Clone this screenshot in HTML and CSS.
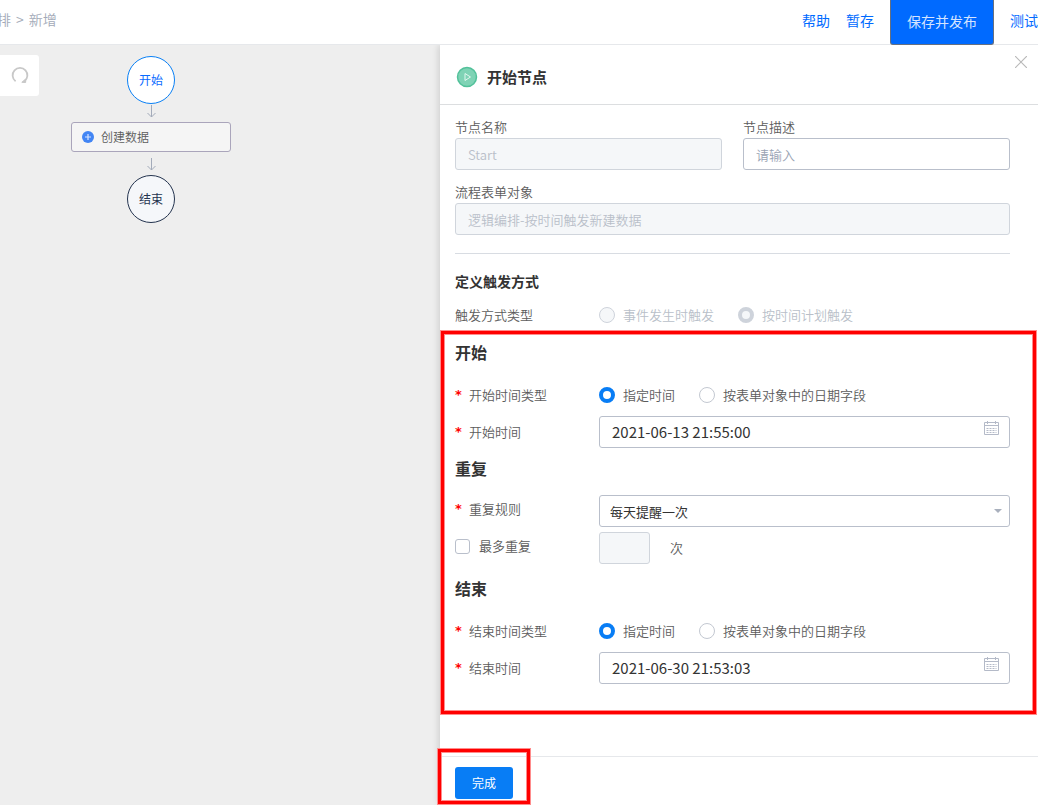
FILE: index.html
```html
<!DOCTYPE html>
<html lang="zh-CN">
<head>
<meta charset="utf-8">
<title>新增</title>
<link rel="stylesheet" href="styles.css">
</head>
<body>
<header class="topbar">
  <nav class="crumbs"><span>排</span><span>&gt;</span><span>新增</span></nav>
  <div class="actions">
    <a href="#">帮助</a>
    <a href="#">暂存</a>
    <button type="button" class="publish">保存并发布</button>
    <a href="#">测试</a>
  </div>
</header>
<div class="workspace">
  <main class="canvas">
    <button type="button" class="redo" aria-label="重做">
      <svg width="18" height="18" viewBox="0 0 18 18" fill="none" stroke="#c8c8c8" stroke-width="1.800"><path d="M4.600 15.200A7.400 7.400 0 1 1 13.400 15.200"/><path d="M10.800 16.300l3.800.2.200-3.600z" fill="#c8c8c8" stroke-width="1"/></svg>
    </button>
    <div class="flow">
      <div class="node-circle node-start">开始</div>
      <svg class="arrow arrow-first" width="10" height="13" viewBox="0 0 10 13" fill="none" stroke="#a3abba"><path d="M5.500 0v12M1.500 8l4 4 4-4"/></svg>
      <div class="node-box">
        <svg width="12" height="12" viewBox="0 0 12 12"><circle cx="6" cy="6" r="6" fill="#4285f4"/><path d="M6 3v6M3 6h6" stroke="#d5e4ff" stroke-width="1.200"/></svg>
        <span>创建数据</span>
      </div>
      <svg class="arrow" width="10" height="13" viewBox="0 0 10 13" fill="none" stroke="#a3abba"><path d="M5.500 0v12M1.500 8l4 4 4-4"/></svg>
      <div class="node-circle node-end">结束</div>
    </div>
  </main>
  <aside class="panel">
    <div class="panel-head">
      <svg width="22" height="22" viewBox="0 0 22 22"><circle cx="11" cy="11" r="9.500" fill="#7fd3b5" stroke="#52c19a" stroke-width="1.500"/><path d="M9 7.500v7l5.500-3.500z" fill="none" stroke="#e2f7ef"/></svg>
      <h1>开始节点</h1>
      <button type="button" class="close" aria-label="关闭">
        <svg width="12" height="12" viewBox="0 0 12 12" stroke="#b9b9b9" stroke-width="1.200"><path d="M0 0l12 12M12 0L0 12"/></svg>
      </button>
    </div>
    <form class="panel-body">
      <div class="fields">
        <div class="field"><label for="name">节点名称</label><input class="input" id="name" type="text" value="Start" disabled></div>
        <div class="field"><label for="desc">节点描述</label><input class="input" id="desc" type="text" placeholder="请输入"></div>
        <div class="field field-wide"><label for="object">流程表单对象</label><input class="input" id="object" type="text" value="逻辑编排-按时间触发新建数据" disabled></div>
      </div>
      <section class="trigger">
        <h2 class="subtitle">定义触发方式</h2>
        <div class="row row-short">
          <span class="caption">触发方式类型</span>
          <div class="options">
            <label class="option"><input type="radio" name="trigger" disabled>事件发生时触发</label>
            <label class="option"><input type="radio" name="trigger" disabled checked>按时间计划触发</label>
          </div>
        </div>
      </section>
      <div class="schedule">
        <section class="group">
          <h2>开始</h2>
          <div class="row">
            <span class="caption required">开始时间类型</span>
            <div class="options">
              <label class="option"><input type="radio" name="start-type" checked>指定时间</label>
              <label class="option"><input type="radio" name="start-type">按表单对象中的日期字段</label>
            </div>
          </div>
          <div class="row">
            <label class="caption required" for="start-time">开始时间</label>
            <div class="date">
              <input class="input" id="start-time" type="text" value="2021-06-13 21:55:00">
              <svg class="calendar" width="15" height="15" viewBox="0 0 15 15" fill="none" stroke="#b4bac8"><path d="M.5 1.500h14v12H.5zM.5 4.500h14M3.500 0v3M11.500 0v3"/><path d="M2.500 7.500h10M2.500 9.500h10M2.500 11.500h10" stroke-dasharray="2 1"/></svg>
            </div>
          </div>
        </section>
        <section class="group group-repeat">
          <h2>重复</h2>
          <div class="row">
            <label class="caption required" for="rule">重复规则</label>
            <div class="select">
              <select class="input" id="rule"><option>每天提醒一次</option></select>
              <svg class="caret" width="8" height="4" viewBox="0 0 8 4"><path d="M0 0h8L4 4z" fill="#a9b0bd"/></svg>
            </div>
          </div>
          <div class="row">
            <label class="caption check"><input type="checkbox">最多重复</label>
            <label class="times"><input class="input" type="text" disabled>次</label>
          </div>
        </section>
        <section class="group group-end">
          <h2>结束</h2>
          <div class="row">
            <span class="caption required">结束时间类型</span>
            <div class="options">
              <label class="option"><input type="radio" name="end-type" checked>指定时间</label>
              <label class="option"><input type="radio" name="end-type">按表单对象中的日期字段</label>
            </div>
          </div>
          <div class="row">
            <label class="caption required" for="end-time">结束时间</label>
            <div class="date">
              <input class="input" id="end-time" type="text" value="2021-06-30 21:53:03">
              <svg class="calendar" width="15" height="15" viewBox="0 0 15 15" fill="none" stroke="#b4bac8"><path d="M.5 1.500h14v12H.5zM.5 4.500h14M3.500 0v3M11.500 0v3"/><path d="M2.500 7.500h10M2.500 9.500h10M2.500 11.500h10" stroke-dasharray="2 1"/></svg>
            </div>
          </div>
        </section>
      </div>
    </form>
    <footer class="panel-foot">
      <div class="finish"><button type="button">完成</button></div>
    </footer>
  </aside>
</div>
</body>
</html>
```
FILE: styles.css
```css
* {
  box-sizing: border-box;
}

body {
  margin: 0;
  min-height: 100vh;
  display: flex;
  flex-direction: column;
  overflow-x: hidden;
  font: 350 13px/20px "Noto Sans CJK SC", sans-serif;
  color: #5c5c5c;
  background: #fff;
}

h1, h2 {
  margin: 0;
  color: #333;
  font-weight: bold;
}

button, input, select {
  font: inherit;
  margin: 0;
}

button {
  padding: 0;
  border: 0;
  background: none;
  cursor: pointer;
}

svg {
  display: block;
  flex: none;
}

/* Top bar */
.topbar {
  display: flex;
  justify-content: space-between;
  height: 45px;
  border-bottom: 1px solid #e6e8eb;
  font-size: 14px;
  white-space: nowrap;
}

.crumbs {
  display: flex;
  gap: 5px;
  margin-left: -3px;
  line-height: 38px;
  color: #a3aab8;
}

.actions {
  display: flex;
  gap: 16px;
  line-height: 40px;
  font-weight: 400;
}

.actions a {
  color: #006aff;
  text-decoration: none;
}

.publish {
  height: 45px;
  padding: 0 16px 2px;
  border: 1px solid #667080;
  border-top: 0;
  border-radius: 0 0 3px 3px;
  background: #006aff;
  color: #d4e4ff;
}

/* Flow canvas */
.workspace {
  flex: 1;
  display: flex;
}

.canvas {
  position: relative;
  flex: 0 0 440px;
  background: #eee;
}

.redo {
  display: flex;
  align-items: center;
  justify-content: flex-end;
  width: 39px;
  height: 41px;
  margin-top: 10px;
  padding: 0 10px 2px 0;
  border-radius: 0 3px 3px 0;
  background: #fff;
}

.flow {
  position: absolute;
  left: 71px;
  top: 11px;
  width: 160px;
  display: flex;
  flex-direction: column;
  align-items: center;
  font-size: 12px;
}

.node-circle {
  width: 48px;
  height: 48px;
  border: 1px solid #24344f;
  border-radius: 50%;
  line-height: 46px;
  text-align: center;
  background: #f5f7fa;
  color: #24344f;
  font-weight: 400;
}

.node-start {
  border-color: #0a80f5;
  background: #fff;
  color: #0a6cff;
}

.node-box {
  display: flex;
  align-items: center;
  gap: 7px;
  align-self: stretch;
  height: 30px;
  padding: 0 10px;
  border: 1px solid #aaa5bb;
  border-radius: 3px;
  background: #f5f5f5;
}

.arrow {
  margin: 6px 0 4px;
}

.arrow-first {
  margin: 1px 0 4px;
}

/* Settings panel */
.panel {
  position: relative;
  flex: 1;
  min-width: 0;
  display: flex;
  flex-direction: column;
  background: #fff;
  box-shadow: -2px 0 6px rgba(0, 0, 0, 0.12);
  clip-path: inset(0 0 0 -10px);
}

.panel-head {
  display: flex;
  align-items: center;
  gap: 9px;
  height: 60px;
  padding: 5px 11px 0 16px;
  border-bottom: 1px solid #dcdee0;
}

.panel-head h1 {
  flex: 1;
  font-size: 15px;
}

.close {
  align-self: flex-start;
  margin-top: 6px;
}

.panel-body {
  flex: 1;
  padding: 12px 28px 12px 15px;
}

.fields {
  display: grid;
  grid-template-columns: 1fr 1fr;
  gap: 12px 21px;
  padding-bottom: 18px;
  border-bottom: 1px solid #d8dce2;
}

.field {
  min-width: 0;
}

.field-wide {
  grid-column: span 2;
}

.field label {
  display: block;
  margin-bottom: 2px;
  line-height: 19px;
}

.input {
  display: block;
  width: 100%;
  height: 32px;
  padding: 0 12px;
  border: 1px solid #b9bfcb;
  border-radius: 3px;
  background: #fff;
  color: #333;
  outline: 0;
}

.input::placeholder {
  color: #98a2b3;
  opacity: 1;
}

.input:disabled {
  border-color: #d0d5dc;
  background: #f5f7f9;
  color: #b9bfc9;
}

.trigger {
  padding-top: 18px;
}

.subtitle {
  font-size: 14px;
  line-height: 18px;
}

.row {
  display: grid;
  grid-template-columns: 144px 1fr;
  min-height: 32px;
  line-height: 32px;
  margin-top: 5px;
}

.row-short {
  min-height: 20px;
  line-height: 20px;
  margin-top: 15px;
}

.group {
  padding-top: 16px;
}

.group-repeat {
  padding-top: 9px;
}

.group-end {
  padding-top: 13px;
}

.group h2 {
  margin-bottom: 16px;
  font-size: 16px;
  line-height: 22px;
}

.group h2 + .row {
  margin-top: 0;
}

.group-repeat .caption {
  line-height: 28px;
}

.required {
  display: flex;
}

.required::before {
  content: "*";
  width: 14px;
  flex: none;
  font-family: "DejaVu Sans", sans-serif;
  font-weight: bold;
  color: #f00;
}

.options {
  display: flex;
  gap: 24px;
  white-space: nowrap;
}

.option {
  display: flex;
  align-items: center;
  gap: 8px;
}

input[type="radio"] {
  appearance: none;
  width: 16px;
  height: 16px;
  border: 1px solid #c3c8d1;
  border-radius: 50%;
  background: #fff;
}

input[type="radio"]:checked {
  border: 4px solid #087df5;
}

input[type="radio"]:disabled {
  border-color: #ced3db;
  background: #f5f7f9;
}

.option:has(:disabled) {
  color: #b9bfc9;
}

.check {
  display: flex;
  align-self: start;
  align-items: center;
  gap: 9px;
}

input[type="checkbox"] {
  appearance: none;
  width: 15px;
  height: 15px;
  border: 1px solid #b9bfcb;
  border-radius: 3px;
  background: #fff;
}

.date, .select {
  position: relative;
}

.date .input {
  font-size: 15px;
  font-weight: 400;
}

.calendar {
  position: absolute;
  right: 11px;
  top: 5px;
}

.select .input {
  appearance: none;
  padding: 0 10px 2px;
  font-weight: 400;
}

.caret {
  position: absolute;
  right: 8px;
  top: 14px;
}

.times {
  display: flex;
  gap: 20px;
}

.times .input {
  width: 51px;
}

/* Red call-out frames */
.schedule, .finish {
  position: relative;
}

.schedule::after, .finish::after {
  content: "";
  position: absolute;
  border: 3px solid #f00;
  box-shadow: 0 0 0 1px #ff8c8c, inset 0 0 0 1px #ff8c8c;
  pointer-events: none;
}

.schedule::after {
  inset: 6px -26px -30px -14px;
}

.finish::after {
  inset: -18px -17px -5px;
}

.panel-foot {
  display: flex;
  padding: 10px 15px 6px;
  border-top: 1px solid #e6e8eb;
}

.finish button {
  display: block;
  height: 32px;
  padding: 0 17px;
  border-radius: 3px;
  background: #087df5;
  color: #fff;
  font-size: 12px;
  font-weight: 400;
}
```
